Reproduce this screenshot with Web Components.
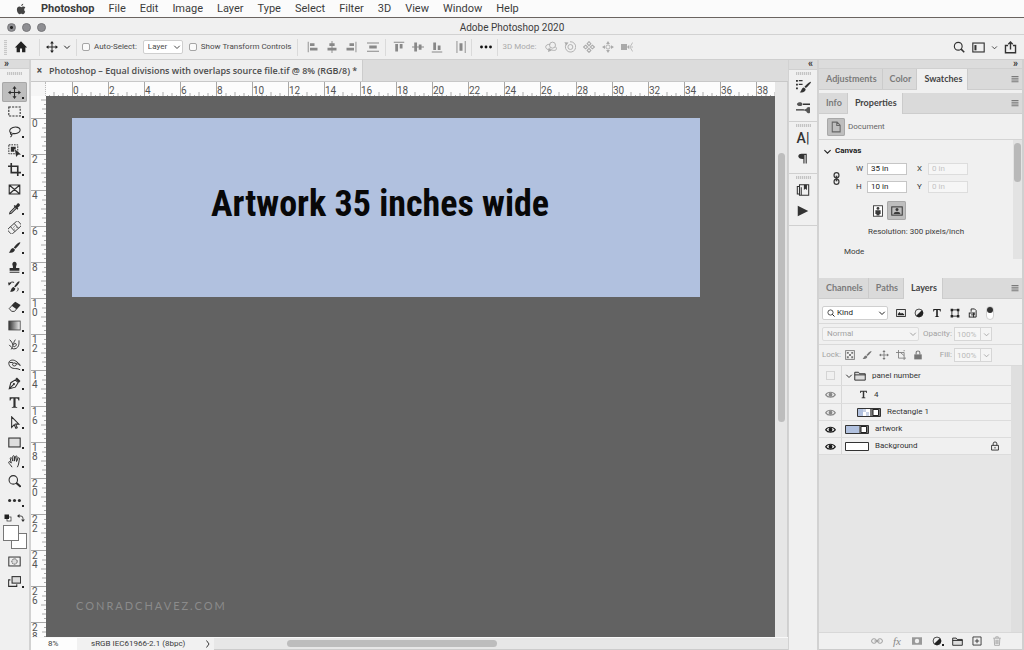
<!DOCTYPE html>
<html lang="en">
<head>
<meta charset="utf-8">
<title>Adobe Photoshop 2020</title>
<style>
  html, body { margin: 0; height: 100%; }
  body { font-family: Roboto, "Liberation Sans", sans-serif; font-size: 8px; line-height: 12px; color: #3a3a3a; background: #f0f0f0; overflow: hidden; }
</style>
</head>
<body>
<ps-app></ps-app>
<script>
const ICONS = {
  apple: '<path fill="#444" d="M11 1c.1 1.5-1.200 3-2.700 3C8.100 2.500 9.500 1.100 11 1zM13.600 11.600c-.6 1.500-1.700 3.300-2.900 3.300-.9 0-1.200-.6-2.300-.6s-1.500.6-2.300.6C4.400 14.900 2.500 11.900 2.500 9c0-2.700 1.700-4.200 3.300-4.200 1.100 0 1.900.7 2.600.7.6 0 1.600-.8 2.900-.8.9 0 1.900.5 2.500 1.300-2.200 1.300-1.900 4.600-.2 5.600z"/>',
  home: '<path fill="#222" d="M8 1.500 1 8.500h2V14h3.800V9.700h2.400V14H13V8.500h2z"/>',
  move: '<path d="M8 2v12M2 8h12" stroke="currentColor" stroke-width="1.300"/><path fill="currentColor" d="M8 0 5.500 3.300h5zM8 16l-2.500-3.300h5zM0 8l3.300-2.500v5zM16 8l-3.300-2.500v5z"/>',
  chev: '<path d="M2.500 5.500 8 11l5.500-5.500" stroke="currentColor" stroke-width="2" fill="none"/>',
  right: '<path d="M5 1l5 7-5 7" stroke="currentColor" stroke-width="2" fill="none"/>',
  al: '<path fill="currentColor" d="M1 1h1.200v14H1zM4 3h6v3.700H4zM4 9h10v3.700H4z"/>',
  ac: '<path fill="currentColor" d="M7.400 0h1.200v16H7.400zM4.500 3h7v3.700h-7zM2 9h12v3.700H2z"/>',
  ar: '<path fill="currentColor" d="M14 1h1.200v14H14zM6 3h6v3.700H6zM2 9h10v3.700H2z"/>',
  dv: '<path fill="currentColor" d="M0 2h16v1.200H0zM0 13h16v1.200H0zM3 6h10v4H3z"/>',
  at: '<path fill="currentColor" d="M1 1h14v1.200H1zM3 4h3.700v10H3zM9 4h3.700v6H9z"/>',
  am: '<path fill="currentColor" d="M0 7.400h16v1.200H0zM3 2h3.700v12H3zM9 4.500h3.700v7H9z"/>',
  ab: '<path fill="currentColor" d="M1 14h14v1.200H1zM3 2h3.700v10H3zM9 6h3.700v6H9z"/>',
  dh: '<path fill="currentColor" d="M2 0h1.200v16H2zM13 0h1.200v16H13zM6 3h4v10H6z"/>',
  dots: '<g fill="currentColor"><circle cx="2" cy="8" r="1.900"/><circle cx="8" cy="8" r="1.900"/><circle cx="14" cy="8" r="1.900"/></g>',
  orbit: '<g fill="none" stroke="currentColor" stroke-width="1.200"><circle cx="10" cy="5.500" r="4"/><path d="M7 4.500C3 4 .5 6 1 8.500c.5 2 2.500 3 4.500 3.300M13.500 7.500c2.500 1.500 2.500 4.500-.5 5-2.500.3-5-.5-7-3"/></g><path fill="currentColor" d="M5 9l4 3.500L4 14.500z"/>',
  roll: '<g fill="none" stroke="currentColor" stroke-width="1.200"><circle cx="8.500" cy="8" r="3.300"/><path d="M3 4a6.900 6.900 0 1 0 5-3"/></g><path fill="currentColor" d="M.5 1.500l5.500.5L3 6z"/>',
  pan3: '<g fill="none" stroke="currentColor" stroke-width="1.400"><path d="M8 .8 10.500 3.500 8 6.200 5.500 3.500zM8 9.800l2.500 2.700L8 15.200l-2.500-2.700zM3.500 5.500 6.200 8l-2.700 2.500L.8 8zM12.500 5.500 15.200 8l-2.700 2.500L9.800 8z"/></g>',
  slide3: '<circle cx="8" cy="8" r="2.800" fill="none" stroke="currentColor" stroke-width="1.200"/><path fill="currentColor" d="M8 0l2.500 4h-5zM8 16l2.500-4h-5zM0 8l4-2.500v5zM16 8l-4-2.500v5z"/>',
  cam: '<path fill="currentColor" d="M0 4h8v8H0zM8 8l3-3v6z"/><path d="M15.500 2l-3.500 6 3.500 6M13.500 8H16" fill="none" stroke="currentColor"/>',
  search: '<circle cx="7" cy="7" r="5.200" fill="none" stroke="currentColor" stroke-width="1.500"/><path d="M10.500 10.500 15 15" stroke="currentColor" stroke-width="2"/>',
  work: '<rect x="1" y="2.500" width="14" height="11" fill="none" stroke="currentColor" stroke-width="1.400"/><path fill="currentColor" d="M3 5h2.500v6.500H3z"/>',
  share: '<path d="M5 5.500H1.800v9h12.400v-9H11M8 10.500V1.500M5.300 4 8 1.300 10.700 4" fill="none" stroke="currentColor" stroke-width="1.700"/>',
  marquee: '<rect x="1" y="2.500" width="14" height="11" fill="none" stroke="currentColor" stroke-width="1.300" stroke-dasharray="2.600 1.400"/>',
  lasso: '<path d="M4 10.500C.5 8 2 4.500 6 3c4-1.200 9 0 9 3s-5 5.500-9.500 4.300M4.500 9a1.500 1.500 0 1 0 .1 3M5 10.500c0 2 0 3-2 4.500" fill="none" stroke="currentColor" stroke-width="1.300"/>',
  objsel: '<path d="M1 1h11v11H1z" fill="none" stroke="currentColor" stroke-width="1.200" stroke-dasharray="2 1.200"/><path fill="currentColor" d="M3.500 3.500h6v3L8 6l-.3 3.500H3.500zM8.500 6.500l7.500 6.500-3.600.3L10 16z"/>',
  crop: '<path d="M4 0v11.800h12M0 4h12v12" fill="none" stroke="currentColor" stroke-width="2"/>',
  frame: '<path d="M1.500 2.500h13v11h-13zM1.500 2.500l13 11M14.500 2.500l-13 11" fill="none" stroke="currentColor" stroke-width="1.400"/>',
  dropper: '<path d="M9 6 2.500 12.500 2 14.500l2-.5L10.500 7.500" fill="none" stroke="currentColor" stroke-width="1.300"/><path fill="currentColor" d="M7 5l1.300-1.300L9.500 4.500l2-2.500c1.200-1.800 4.400 1 2.800 2.800L11.800 7l1 1.200-1.300 1.300z"/>',
  heal: '<g transform="rotate(-42 8 8)" fill="none" stroke="currentColor"><rect x="-.5" y="4" width="17" height="8" rx="1.500"/><path d="M5 4v8M11 4v8M6.500 7h1M9 7h1M6.500 9.500h1M9 9.500h1"/></g>',
  brush: '<path fill="currentColor" d="M15 1.500c1 .8-3 5.500-6 8L7 8C9.500 4.800 13.500.8 15 1.500zM6.300 8.600 8.500 10.500c0 3-3.500 4.500-7.500 3.500 2-1 2-5 5.300-5.400z"/>',
  stamp: '<path fill="currentColor" d="M8 1a2.800 2.800 0 0 1 2.600 3.500C10.200 6 9.500 7 10 8.500h4V12H2V8.500h4C6.500 7 5.800 6 5.400 4.500A2.800 2.800 0 0 1 8 1zM2 13.200h12v1.300H2z"/>',
  hist: '<path fill="currentColor" d="M14 1.500c1 .8-2 5-5 7.500L7.500 8C10 4.800 12.500.8 14 1.500zM7 8.600l2 1.900c0 3-3.500 4.500-6.500 3.500 1.500-1 1.500-5 4.500-5.400z"/><path d="M1.500 5.500c1-3 4-3.500 6-2.500M12 9.500c1 1.500.5 3-1 4.500" fill="none" stroke="currentColor" stroke-width="1.200"/><path fill="currentColor" d="M0 3l4.500.5L1 7z"/>',
  eraser: '<path d="M1.500 10.500 8 3.500l6 3.500-6 7H4.500z" fill="none" stroke="currentColor" stroke-width="1.100"/><path fill="currentColor" d="M4.500 7 9 2l6.500 4-5 5.500z"/>',
  grad: '<defs><linearGradient id="g"><stop stop-color="#333"/><stop offset="1" stop-color="#f2f2f2"/></linearGradient></defs><rect x="1" y="2.500" width="14" height="11" fill="url(#g)" stroke="#444"/>',
  smudge: '<path d="M2 2c2 2 4 5 4 7M9 2c-1 2-2 3-2 5M13.500 3c0 3 .5 7-3 9.500-2.500 1.500-5 1-6.500-.5M4 14c1-2 2-3 2-5 2-3 5-3 4 0-1 2-3 2-3.500 1M1.500 8.500 4 11" fill="none" stroke="currentColor" stroke-width="1.200"/>',
  dodge: '<path d="M1 6.500c0-4.500 6-4.500 8-3 3 2 5 3.500 6 5.500M1 6.500C1.500 11.500 5 13 9.500 13c2 0 3.500.5 5.500 1.500M10 7C7 4.500 4 7.500 6.500 9.500c2 1 4.500-.5 3.500-2.500 2 0 4 1 5 2.500M2 5.500h4" fill="none" stroke="currentColor" stroke-width="1.200"/>',
  pen: '<path d="M1.500 14.500 3.500 7 9 3.500l3.500 3.500L9 12.500zM2 14l5-5" fill="none" stroke="currentColor" stroke-width="1.300"/><circle cx="7.300" cy="8.700" r="1.300" fill="currentColor"/><path fill="currentColor" d="M9 2.500 11 .7l4.300 4.300-1.800 2z"/>',
  type: '<path fill="currentColor" d="M2 1.500h12v4h-1.200c-.2-1.800-.7-2.300-2.600-2.300H9.300v9c0 .9.4 1.200 2 1.200v1.100H4.700v-1.100c1.600 0 2-.3 2-1.200v-9h-.9c-1.900 0-2.400.5-2.600 2.300H2z"/>',
  arrow: '<path d="M4.500 1v13l3.200-3.300 2 4.500 1.700-.7-2-4.500h4z" fill="none" stroke="currentColor" stroke-width="1.300"/>',
  rect: '<rect x="1" y="2.500" width="14" height="11" fill="#ddd" stroke="currentColor" stroke-width="1.300"/>',
  hand: '<path d="M5 15C4 13 1 10.500 .8 9c.2-1.500 1.900-1 3.200 1L2.800 4.300c0-1.500 1.500-1.500 2 0L6 7.500 5.800 2c0-1.500 2-1.500 2.200 0v5.500L9.200 2c.3-1.300 2.100-1 2 .4l-.7 5.600 1.700-4c.5-1.200 2.200-.7 1.900.8-.8 3-.6 7-2.600 10.200" fill="none" stroke="currentColor" stroke-width="1.200"/>',
  zoom: '<circle cx="6.500" cy="6" r="5.200" fill="none" stroke="currentColor" stroke-width="1.300"/><path d="M10 9.500l5.500 5" stroke="currentColor" stroke-width="2.500"/>',
  defcol: '<rect x="6" y="6" width="8" height="8" fill="#fff" stroke="#333" stroke-width="1.500"/><rect x="1" y="1" width="9" height="9" fill="#222"/>',
  swap: '<path d="M4 4h4q4 0 4 5v2" fill="none" stroke="currentColor" stroke-width="1.700"/><path fill="currentColor" d="M0 4l5-3.800v7.600zM12 16 8.200 11h7.600z"/>',
  mask: '<rect x="1" y="2.500" width="14" height="11" fill="none" stroke="currentColor" stroke-width="1.200"/><circle cx="8" cy="8" r="3.300" fill="#ddd" stroke="currentColor" stroke-dasharray="1.500 .8"/>',
  screen: '<rect x="5" y="2" width="10.500" height="8" fill="#ddd" stroke="currentColor" stroke-width="1.300"/><path d="M3 6H.8v8h10v-2.500" fill="none" stroke="currentColor" stroke-width="1.300"/>',
  brushset: '<path fill="currentColor" d="M0 1h2v2H0zM0 5h2v2H0zM0 9h2v2H0zM3 1h4v1.300H3zM3 5h4v1.300H3zM16 3c.6.7-3 5-5.500 6.500L9 8.300C11 6 15.200 2.400 16 3zM8.500 9l1.800 1.600c0 2.700-3 4.400-6.300 3.400 2-1 1.500-4.500 4.500-5z"/>',
  sliders: '<path fill="currentColor" d="M8 4h8v1.600H8zM0 10.500h9v1.600H0z"/><path fill="#555" d="M1 4.800C2 2 7 2 7.500 4.800 7 7.600 2 7.600 1 4.800zM8 11.300 12 10c0-2 4-3 4-1v5c0 2-4 1-4-1z"/>',
  para: '<path fill="currentColor" d="M6 1h7v13h-1.500V2.500H10V14H8.500V8C0 8.500 0 1 6 1z"/>',
  lib: '<path d="M4 2h10.500v12H4zM4 4H1.500v8.500H4M6 13.800v-9" fill="none" stroke="currentColor" stroke-width="1.200"/><path fill="currentColor" d="M9 2h3.500v6L10.700 6.500 9 8z"/>',
  play: '<path fill="currentColor" d="M1 1l14 7-14 7z"/>',
  menu: '<path fill="currentColor" d="M1 2h14v2H1zM1 5.500h14v2H1zM1 9h14v2H1zM1 12.500h14v2H1z"/>',
  page: '<path d="M3 1.500h6.500l4 4v9H3zM9 1.500V6h4.500" fill="none" stroke="currentColor" stroke-width="1.400"/>',
  chain: '<g fill="none" stroke="currentColor" stroke-width="1.500"><rect x="5" y=".8" width="6" height="6.500" rx="3"/><rect x="5" y="8.700" width="6" height="6.500" rx="3"/><path d="M8 4.500v7" stroke-width="2"/></g>',
  portrait: '<rect x="2" y="1" width="12" height="14" fill="#fff" stroke="currentColor" stroke-width="1.200"/><circle cx="8" cy="4.500" r="1.900" fill="currentColor"/><path fill="currentColor" d="M4.500 7h7v5h-1.500v2H6v-2H4.500z"/>',
  landscape: '<rect x="1" y="2.500" width="14" height="11" fill="none" stroke="currentColor" stroke-width="1.400"/><circle cx="8" cy="6" r="2" fill="currentColor"/><path fill="currentColor" d="M3.500 12c0-4 9-4 9 0z"/>',
  image: '<rect x="1" y="2.500" width="14" height="11" fill="none" stroke="currentColor" stroke-width="1.400"/><path fill="currentColor" d="M3 11.500V9.500l2.500-3L8 9l1.500-1.500L13 10v1.500z"/>',
  adj: '<circle cx="8" cy="8" r="6.300" fill="none" stroke="currentColor" stroke-width="1.300"/><path fill="currentColor" d="M12.500 3.500A6.300 6.300 0 0 1 3.500 12.500z"/>',
  shape: '<path d="M3 3h10v10H3z" fill="none" stroke="currentColor" stroke-width="1.400"/><path fill="currentColor" d="M1 1h4v4H1zM11 1h4v4h-4zM1 11h4v4H1zM11 11h4v4h-4z"/>',
  smart: '<path d="M5 6V1.500h5.500L13 4v10.500H9" fill="none" stroke="currentColor" stroke-width="1.500"/><rect x="2" y="8" width="7" height="6.500" fill="none" stroke="currentColor" stroke-width="1.500"/><path d="M5 11h5V7" fill="none" stroke="currentColor" stroke-width="1.500"/>',
  checks: '<rect x="1" y="1" width="14" height="14" fill="none" stroke="currentColor" stroke-width="1.400"/><path fill="currentColor" d="M3 3h3v3H3zM10 3h3v3h-3zM6.500 6.500h3v3h-3zM3 10h3v3H3zM10 10h3v3h-3z"/>',
  artb: '<path d="M4 0v13h12M0 4h13v12M13 0v2M7 4l6 5" fill="none" stroke="currentColor" stroke-width="1.300"/>',
  lock: '<path d="M5 7V4.500a3 3 0 0 1 6 0V7" fill="none" stroke="currentColor" stroke-width="1.700"/><path fill="currentColor" d="M2 7h12v8H2z"/>',
  lockO: '<path d="M5 7V4.500a3 3 0 0 1 6 0V7M2.500 7h11v7.500h-11zM8 9.500v2.500" fill="none" stroke="currentColor" stroke-width="1.500"/>',
  folder: '<path d="M1 3h5l1.500 2H15v8.500H1zM1 6.500h14" fill="#ddd" stroke="currentColor" stroke-width="1.300"/>',
  eye: '<path d="M1 8.500C4 3.500 12 3.500 15 8.500 12 13 4 13 1 8.500z" fill="none" stroke="currentColor" stroke-width="1.600"/><circle cx="8" cy="8.300" r="2.800" fill="currentColor"/>',
  link: '<g fill="none" stroke="currentColor" stroke-width="1.300"><rect x=".8" y="5" width="6.500" height="6" rx="3"/><rect x="8.700" y="5" width="6.500" height="6" rx="3"/><path d="M4.500 8h7"/></g>',
  lmask: '<path fill="currentColor" fill-rule="evenodd" d="M0 2h16v12H0zM8 4.500a3.500 3.500 0 1 0 0 7 3.500 3.500 0 0 0 0-7z"/>',
  plus: '<path d="M1.500 1.500h13v13h-13zM8 4.500v7M4.500 8h7" fill="none" stroke="currentColor" stroke-width="1.300"/>',
  trash: '<path d="M2 3.500h12M6 3V1.300h4V3M3.500 4l.7 11h7.600l.7-11M6.300 6v7M8 6v7M9.700 6v7" fill="none" stroke="currentColor" stroke-width="1.200"/>'
};

class Base extends HTMLElement {
  constructor() { super(); this.attachShadow({ mode: 'open' }); }
  connectedCallback() { this.shadowRoot.innerHTML = '<style>*{box-sizing:border-box}button,select,input{font:inherit;color:inherit;margin:0}</style>' + this.render(); }
  a(n, d = '') { return this.getAttribute(n) ?? d; }
}
const def = (tag, render) => customElements.define(tag, class extends Base { render() { return render(this); } });

def('ps-icon', e => `<style>:host{display:block;width:${e.a('size', 12)}px;height:${e.a('size', 12)}px;flex:none}svg{display:block;width:100%;height:100%}</style><svg viewBox="0 0 16 16" aria-hidden="true">${ICONS[e.a('name')]}</svg>`);

def('ps-button', e => `<style>
  :host{display:block;width:19px;flex:none}
  button{display:grid;place-items:center;width:100%;height:100%;padding:0;border:0;border-radius:2px;background:none;position:relative}
  :host([selected]) button{background:#bebebe;box-shadow:inset 0 0 0 1px #a8a8a8}
  i{position:absolute;right:3px;bottom:3px;width:2px;height:2px;background:#222}
  </style><button aria-label="${e.a('label', e.a('icon'))}"><ps-icon name="${e.a('icon')}" size="${e.a('size', 12)}"></ps-icon>${e.hasAttribute('more') ? '<i></i>' : ''}</button>`);

def('ps-select', e => `<style>
  :host{display:grid;height:14px;align-items:center}
  select,ps-icon{grid-area:1/1}
  select{appearance:none;width:100%;height:100%;padding:0 0 0 var(--pad,4px);border:1px solid var(--line,#cfcfcf);border-radius:2px;background:var(--fill,#fff)}
  ps-icon{justify-self:end;margin-right:2px;pointer-events:none}
  </style><select aria-label="${e.a('label')}"><option>${e.a('value')}</option></select><ps-icon name="chev" size="8"></ps-icon>`);

def('ps-check', e => `<style>
  :host{display:block}label{display:flex;align-items:center;gap:4px;white-space:nowrap}
  input{appearance:none;width:8px;height:8px;border:1px solid #a5a5a5;border-radius:2px;background:#fafafa}
  </style><label><input type="checkbox">${e.a('label')}</label>`);

def('ps-grip', e => `<style>:host{display:block;width:15px;height:3px;flex:none;background:repeating-linear-gradient(90deg,#c4c4c4 0 1px,#e4e4e4 1px 2px)}:host([vertical]){width:3px;height:15px;background:repeating-linear-gradient(#c8c8c8 0 1px,#e8e8e8 1px 2px)}</style>`);

def('ps-menubar', e => `<style>
  :host{display:block;background:#fbfbfb;border-bottom:1px solid #6a6460;font-size:11px;line-height:17px;color:#3c3c3c}
  nav{display:flex;gap:14px;padding-left:15px;height:17px;align-items:center}
  a{color:inherit;text-decoration:none}b{font-weight:700}
  </style><nav><ps-icon name="apple"></ps-icon><a href="#"><b>Photoshop</b></a>${['File','Edit','Image','Layer','Type','Select','Filter','3D','View','Window','Help'].map(t => `<a href="#">${t}</a>`).join('')}</nav>`);

def('ps-titlebar', e => `<style>
  :host{display:grid;grid-template-columns:1fr auto 1fr;align-items:center;height:17px;border-bottom:1px solid #d2d2d2;color:#3c3c3c}
  div{display:flex;gap:6px;padding-left:7px}
  button{width:9px;height:9px;padding:0;border:1px solid #77777a;border-radius:50%;background:#8e8e92}
  button:first-child{background:radial-gradient(#222 0 1px,#8e8e92 2px)}
  h1{margin:0;font-size:10px;font-weight:400;line-height:16px;padding-top:2px}
  </style><div><button aria-label="Close"></button><button aria-label="Minimise"></button><button aria-label="Zoom"></button></div><h1>Adobe Photoshop 2020</h1>`);

def('ps-options', e => {
  const b = (...n) => n.map(i => `<ps-button icon="${i}"></ps-button>`).join('');
  return `<style>
  :host{display:flex;align-items:center;height:25px;border-bottom:1px solid #cfcfcf;color:#4a4a4a}
  div{display:flex;align-items:center;height:17px;border-right:1px solid #dadada}
  ps-button{height:17px}
  .home{padding:0 9px 0 4px;gap:4px}.move{padding:0 4px 0 2px;color:#222}
  .auto{padding:0 6px 0 5px;gap:6px}.auto ps-select{width:40px}
  .al{padding:0 3px 0 5px;color:#888}.al ps-button:last-child{margin-left:3px}
  .al.v{padding:0 1px 0 3px}.al.v ps-button:last-child{margin-left:5px}
  .dots{color:#111;padding:0 2px 0 4px}.mode{padding-left:4px;color:#aaa;border:0}.mode span{margin-right:5px}
  .right{margin-left:auto;border:0;gap:1px;padding-right:4px;color:#333}.small{width:11px}
  </style>
  <div class="home"><ps-grip vertical></ps-grip><ps-button icon="home" size="14"></ps-button></div>
  <div class="move">${b('move')}<ps-button class="small" icon="chev" size="8"></ps-button></div>
  <div class="auto"><ps-check label="Auto-Select:"></ps-check><ps-select label="Auto-select target" value="Layer"></ps-select><ps-check label="Show Transform Controls"></ps-check></div>
  <div class="al">${b('al','ac','ar','dv')}</div><div class="al v">${b('at','am','ab','dh')}</div>
  <div class="dots">${b('dots')}</div>
  <div class="mode"><span>3D Mode:</span>${b('orbit','roll','pan3','slide3','cam')}</div>
  <div class="right">${b('search')}<ps-button icon="work" size="13"></ps-button><ps-button class="small" icon="chev" size="7"></ps-button><ps-button icon="share" size="13"></ps-button></div>`;
});

def('ps-tools', e => `<style>
  :host{display:flex;flex-direction:column;align-items:center;border-right:2px solid #d2d2d2;color:#2e2e2e}
  header{align-self:stretch;height:9px;padding-left:4px;background:#dcdcdc;border-bottom:1px solid #d0d0d0;font:700 10px/7px Roboto,sans-serif;color:#333}
  ps-grip{margin:3px 0 7px}
  ps-button{width:25px;height:19px}ps-button:nth-of-type(3n),ps-button:nth-of-type(9n + 1){height:20px}
  .row{display:flex;gap:5px;margin-top:4px}
  .sw{display:grid;grid-template:repeat(3,8px)/repeat(3,8px);margin:3px 0}
  .sw i{background:#fff;border:1px solid #777}.bg{grid-area:2/2/4/4}.fg{grid-area:1/1/3/3}
  </style><header>»</header><ps-grip></ps-grip>
  ${['move','marquee','lasso','objsel','crop','frame','dropper','heal','brush','stamp','hist','eraser','grad','smudge','dodge','pen','type','arrow','rect','hand','zoom','dots'].map((n, i) => `<ps-button icon="${n}" size="13" ${i ? '' : 'selected'} ${n == 'frame' || n == 'zoom' ? '' : 'more'}></ps-button>`).join('')}
  <div class="row"><ps-icon name="defcol" size="8"></ps-icon><ps-icon name="swap" size="8"></ps-icon></div>
  <div class="sw"><i class="bg"></i><i class="fg"></i></div>
  <ps-button icon="mask" size="13"></ps-button><ps-button icon="screen" size="13" more></ps-button>`);

def('ps-ruler', e => {
  const v = e.hasAttribute('vertical'), n = +e.a('count');
  const tick = k => { const p = k * 4.5, l = k % 4 == 0 ? 5 : k % 2 == 0 ? 4 : 2; return v ? `M${15 - l} ${p}h${l}` : `M${p} ${15 - l}v${l}`; };
  const ticks = [1, 2, 3, 4, 5, 6, 7].map(tick).join('');
  const svg = `<svg ${v ? 'width="15" height="36"' : 'width="36" height="15"'} aria-hidden="true"><path d="${ticks}" stroke="#aaa" fill="none"/></svg>`;
  const cell = t => `<div>${svg}<span>${v ? String(t).split('').join('<br>') : t}</span></div>`;
  return `<style>
  :host{display:flex;overflow:hidden;background:#fcfcfc;font-size:10px;line-height:9px;color:#555}
  :host([vertical]){flex-direction:column}
  div{display:grid;flex:none;width:36px;height:15px;border-left:1px solid #a8a8a8}
  svg,span{grid-area:1/1}svg{display:block}span{padding:4px 0 0}
  div:first-of-type{width:26px;border:0;justify-content:end;overflow:hidden}
  :host([vertical]) div{width:15px;height:36px;border:0;border-top:1px solid #a8a8a8}
  :host([vertical]) span{padding:0 0 0 1px}
  :host([vertical]) div:first-of-type{height:22px;border:0;align-content:end}
  </style><div>${svg}</div>${Array.from({ length: n }, (_, i) => cell(i * 2)).join('')}`;
});

def('ps-document', e => `<style>
  :host{display:grid;grid-template-rows:22px 14px minmax(0,1fr) 13px;min-width:0;min-height:0}
  .tabs{background:#dcdcdc;border-bottom:1px solid #c8c8c8;display:flex}
  .tab{display:flex;align-items:center;gap:6px;padding:0 5px;background:#efefef;border-right:1px solid #ccc;font:600 9px/12px "Open Sans",sans-serif;color:#4c4c4c;white-space:nowrap}
  .tab button{border:0;background:none;padding:0;width:7px;font:700 10px/12px Roboto,sans-serif}
  .rule,.mid{display:grid;grid-template-columns:15px minmax(0,1fr) 13px;min-height:0}
  .corner{background:#f6f6f6;border-right:1px dotted #bbb}
  .side{background:#e6e6e6;border-right:1px solid #cfcfcf}
  .canvas{display:flex;flex-direction:column;justify-content:space-between;background:#626262;overflow:hidden;min-height:0}
  .art{width:628px;height:179px;margin:22px 0 0 26px;padding:62px 0 0 139px;background:#b1c1df}
  .art h2{margin:0;font:700 36px/48px "Roboto Condensed","Open Sans Condensed","Liberation Sans Narrow",Roboto,sans-serif;color:#080808;white-space:nowrap}
  .mark{margin:0 0 23px 30px;font:400 11px/16px Lato,sans-serif;letter-spacing:2px;color:#8b8b8b}
  .vt{width:7px;height:269px;margin:57px 0 0 3px;border-radius:4px;background:#bdbdbd}
  .status{display:flex;align-items:center;border-top:1px solid #f8f8f8;border-bottom:1px solid #ccc;background:#e7e7e7}
  .pct{width:46px;padding-left:17px;background:#fdfdfd}.prof{display:flex;align-items:center;justify-content:space-between;width:137px;padding:0 2px 0 14px;background:#f1f1f1}
  .track{flex:1;padding-left:73px}.ht{width:210px;height:7px;border-radius:4px;background:#bdbdbd}
  </style>
  <div class="tabs"><div class="tab"><button aria-label="Close tab">×</button>Photoshop – Equal divisions with overlaps source file.tif @ 8% (RGB/8) *</div></div>
  <div class="rule"><div class="corner"></div><ps-ruler count="20"></ps-ruler><div class="side"></div></div>
  <div class="mid"><ps-ruler vertical count="15"></ps-ruler><div class="canvas"><div class="art"><h2>Artwork 35 inches wide</h2></div><div class="mark">CONRADCHAVEZ.COM</div></div><div class="side"><div class="vt"></div></div></div>
  <div class="status"><span class="pct">8%</span><span class="prof">sRGB IEC61966-2.1 (8bpc)<ps-icon name="right" size="8"></ps-icon></span><div class="track"><div class="ht"></div></div></div>`);

def('ps-dock', e => `<style>
  :host{display:flex;flex-direction:column;border:solid #d2d2d2;border-width:0 2px 0 1px;color:#333}
  header{height:9px;padding-right:4px;text-align:right;background:#dcdcdc;font:700 10px/7px Roboto,sans-serif;flex:none}
  section{display:flex;flex-direction:column;align-items:center;gap:1px;padding:2px 0 4px;border-top:1px solid #d0d0d0}
  section:last-of-type{border-bottom:1px solid #d0d0d0}
  ps-button{width:27px;height:20px}
  .a{font:500 14px/20px Roboto,sans-serif;border:0;background:none;padding:0}
  </style><header>«</header>
  <section><ps-grip></ps-grip><ps-button icon="brushset" size="15"></ps-button><ps-button icon="sliders" size="14"></ps-button></section>
  <section><ps-grip></ps-grip><button class="a" aria-label="Character">A|</button><ps-button icon="para"></ps-button></section>
  <section><ps-grip></ps-grip><ps-button icon="lib" size="14"></ps-button><ps-button icon="play" size="12"></ps-button></section>`);

def('ps-tabs', e => `<style>
  :host{display:flex;height:21px;background:#dadada;border-bottom:1px solid #cdcdcd;font:700 9px/20px Lato,sans-serif;color:#7a7a7a;flex:none}
  button{height:20px;padding:0 5px 0 7px;border:0;border-right:1px solid #cbcbcb;background:none}
  button.on{height:21px;padding-bottom:1px;background:#f0f0f0;color:#444}
  ps-icon{margin:6px 3px 0 auto}
  </style>${e.a('items').split(',').map(t => `<button ${t == e.a('active') ? 'class="on"' : ''}>${t}</button>`).join('')}<ps-icon name="menu" size="8"></ps-icon>`);

def('ps-field', e => `<style>
  :host{display:block}label{display:flex;align-items:center;gap:4px}span{width:7px}
  input{width:40px;height:12px;padding:0 3px;border:1px solid #c6c6c6;background:#fff;color:#222}
  input:disabled{border-color:#ddd;background:#f6f6f6;color:#c4c4c4}
  </style><label><span>${e.a('label')}</span><input value="${e.a('value')}" ${e.hasAttribute('off') ? 'disabled' : ''}></label>`);

def('ps-properties', e => `<style>
  :host{display:flex;flex-direction:column;height:164px;flex:none}
  .doc{display:flex;align-items:center;gap:3px;height:26px;padding-left:8px;border-bottom:1px solid #d4d4d4;color:#666}
  .doc ps-button{width:18px;height:18px}
  .body{display:flex;flex:1}.main{flex:1;padding-top:5px}
  h3{display:flex;align-items:center;gap:3px;margin:0 0 6px 4px;font-size:8px;line-height:12px;font-weight:700;color:#222}
  .dims{display:grid;grid-template-columns:16px auto auto;grid-template-rows:12px 12px;gap:6px 10px;padding-left:11px;justify-content:start}
  .dims ps-icon{grid-row:1/3;align-self:center}
  .ori{display:flex;margin:8px 0 6px 49px}.ori ps-button{width:19px;height:19px}
  p{margin:0 0 8px 49px}p.m{margin-left:25px}
  .sc{width:9px;height:119px;background:#e3e3e3;padding:3px 0 0 1px}.sc i{display:block;width:7px;height:39px;border-radius:4px;background:#b9b9b9}
  </style>
  <div class="doc"><ps-button icon="page" selected></ps-button>Document</div>
  <div class="body"><div class="main"><h3><ps-icon name="chev" size="9"></ps-icon>Canvas</h3>
  <div class="dims"><ps-icon name="chain" size="13"></ps-icon><ps-field label="W" value="35 in"></ps-field><ps-field label="X" value="0 in" off></ps-field><ps-field label="H" value="10 in"></ps-field><ps-field label="Y" value="0 in" off></ps-field></div>
  <div class="ori"><ps-button icon="portrait"></ps-button><ps-button icon="landscape" selected></ps-button></div>
  <p>Resolution: 300 pixels/inch</p><p class="m">Mode</p></div><div class="sc"><i></i></div></div>`);

def('ps-layer', e => {
  const k = e.a('kind');
  const art = {
    folder: '<ps-icon name="chev" size="8"></ps-icon><ps-icon name="folder" size="12"></ps-icon>',
    type: '<ps-icon name="type" size="9"></ps-icon>',
    rect: '<svg width="24" height="9"><path d="M.5.5h23v8H.5z" fill="#fff" stroke="#333"/><path d="M1 1h5v7H1z" fill="#b1c1df"/><path d="M6 1h3v3H6zM9 4h3v4H9z" fill="#c9d3e6"/><path d="M13 1h10v7H13z" fill="#777"/><path d="M16 1.500h5.500v6H16z" fill="#fff" stroke="#222"/></svg>',
    art: '<svg width="24" height="9"><path d="M.5.5h23v8H.5z" fill="#b1c1df" stroke="#333"/><path d="M14 1h9v7h-9z" fill="#777"/><path d="M16 1.500h5.500v6H16z" fill="#fff" stroke="#222"/></svg>',
    bg: '<svg width="24" height="9"><path d="M.5.5h23v8H.5z" fill="#fff" stroke="#333"/></svg>'
  }[k];
  return `<style>
  :host{display:flex;align-items:center;height:${e.a('h', 17)}px;border-bottom:1px solid #dcdcdc;color:#333}
  .eye{display:grid;place-items:center;align-self:stretch;width:23px;border:0;border-right:1px solid #d8d8d8;background:none;padding:0;color:${e.hasAttribute('dim') ? '#888' : '#1a1a1a'}}
  .eye i{width:9px;height:9px;border:1px solid #d4d4d4}
  .art{display:flex;align-items:center;gap:1px;padding:0 6px 0 ${e.a('indent', 3)}px}svg{display:block}
  .lock{margin:0 11px 0 auto}
  </style><button class="eye" aria-label="Toggle visibility">${k == 'folder' ? '<i></i>' : '<ps-icon name="eye" size="11"></ps-icon>'}</button><span class="art">${art}</span><span>${e.a('name')}</span>${k == 'bg' ? '<ps-icon class="lock" name="lockO" size="10"></ps-icon>' : ''}`;
});

def('ps-layers', e => {
  const b = (...n) => n.map(i => `<ps-button icon="${i}" size="10"></ps-button>`).join('');
  return `<style>
  :host{display:flex;flex-direction:column;flex:1;min-height:0}
  .bar{display:flex;align-items:center;height:22px;padding-left:3px;border-bottom:1px solid #dadada;flex:none;color:#a2a2a2}
  .bar.filter{height:25px;color:#222;padding-top:4px}
  .kind{display:grid;align-items:center;width:66px;margin-right:4px}.kind>*{grid-area:1/1}.kind ps-icon{margin-left:5px;z-index:1}.kind ps-select{--pad:14px}
  .filter ps-button{width:18px;height:14px}
  .tog{display:flex;align-items:flex-start;width:8px;height:14px;margin-left:4px;padding:0;border:1px solid #d0d0d0;border-radius:4px;background:#fff}
  .tog i{width:6px;height:6px;border-radius:50%;background:#333}
  .blend{width:97px;margin-right:4px;--fill:#f4f4f4;--line:#dcdcdc}
  .pct{display:grid;grid-template-columns:27px 11px;margin-left:auto;margin-right:30px}
  .num{width:27px;height:14px;border:1px solid #d6d6d6;background:#f6f6f6;padding:0 2px;color:#bbb}
  .drop{width:11px;height:14px;border:1px solid #d6d6d6;border-left:0;background:#f4f4f4;padding:0;display:grid;place-items:center}
  .lk{display:flex;color:#777}.lk ps-button{width:17px;height:16px}
  .fill{margin-left:auto;margin-right:2px}.fill+.pct{margin-left:0}
  .bar.locks{height:21px}
  .list{flex:1;min-height:0;display:grid;grid-template-columns:1fr 11px;background:#e6e6e6}.track{background:#dfdfdf}
  .rows{display:flex;flex-direction:column}.rows ps-layer{background:#f0f0f0;flex:none}
  footer{display:flex;align-items:center;justify-content:flex-end;height:18px;padding-right:15px;border-top:1px solid #d8d8d8;border-bottom:1px solid #ccc;color:#222;flex:none}
  footer ps-button{width:20px;height:15px}footer .dim{color:#999}.fx{width:20px;border:0;background:none;padding:0;font:italic 11px/14px "Liberation Serif",serif;color:#888}
  </style>
  <div class="bar filter"><div class="kind"><ps-icon name="search" size="8"></ps-icon><ps-select label="Filter kind" value="Kind"></ps-select></div>${b('image','adj','type','shape','smart')}<button class="tog" aria-label="Toggle filter"><i></i></button></div>
  <div class="bar locks"><ps-select class="blend" label="Blend mode" value="Normal"></ps-select><label for="op">Opacity:</label><div class="pct"><input class="num" id="op" value="100%"><button class="drop" aria-label="Opacity slider"><ps-icon name="chev" size="7"></ps-icon></button></div></div>
  <div class="bar locks"><span>Lock:</span><div class="lk">${b('checks','brush','move','artb','lock')}</div><label class="fill" for="fi">Fill:</label><div class="pct"><input class="num" id="fi" value="100%"><button class="drop" aria-label="Fill slider"><ps-icon name="chev" size="7"></ps-icon></button></div></div>
  <div class="list"><div class="rows">
  <ps-layer kind="folder" name="panel number" h="20"></ps-layer><ps-layer kind="type" name="4" indent="17" h="18" dim></ps-layer><ps-layer kind="rect" name="Rectangle 1" indent="15" dim></ps-layer><ps-layer kind="art" name="artwork"></ps-layer><ps-layer kind="bg" name="Background"></ps-layer>
  </div><div class="track"></div></div>
  <footer><ps-button class="dim" icon="link"></ps-button><button class="fx" aria-label="Layer style">fx</button><ps-button class="dim" icon="lmask" size="10"></ps-button><ps-button icon="adj" size="10" more></ps-button><ps-button icon="folder" size="11"></ps-button><ps-button icon="plus" size="10"></ps-button><ps-button class="dim" icon="trash" size="10"></ps-button></footer>`;
});

def('ps-panels', e => `<style>
  :host{display:flex;flex-direction:column;min-height:0;border-right:2px solid #d0d0d0}
  header{height:9px;padding-right:4px;text-align:right;background:#dcdcdc;border-bottom:1px solid #d0d0d0;font:700 10px/7px Roboto,sans-serif;color:#333;flex:none}
  .gap{margin-top:3px}
  </style><header>»</header>
  <ps-tabs items="Adjustments,Color,Swatches" active="Swatches"></ps-tabs>
  <ps-tabs class="gap" items="Info,Properties" active="Properties"></ps-tabs>
  <ps-properties></ps-properties>
  <ps-tabs items="Channels,Paths,Layers" active="Layers"></ps-tabs>
  <ps-layers></ps-layers>`);

def('ps-app', e => `<style>
  :host{display:flex;flex-direction:column;height:100vh}
  main{flex:1;min-height:0;display:grid;grid-template-columns:31px minmax(0,1fr) 31px 205px;grid-template-rows:minmax(0,1fr)}
  </style><ps-menubar></ps-menubar><ps-titlebar></ps-titlebar><ps-options></ps-options>
  <main><ps-tools></ps-tools><ps-document></ps-document><ps-dock></ps-dock><ps-panels></ps-panels></main>`);
</script>
</body>
</html>
